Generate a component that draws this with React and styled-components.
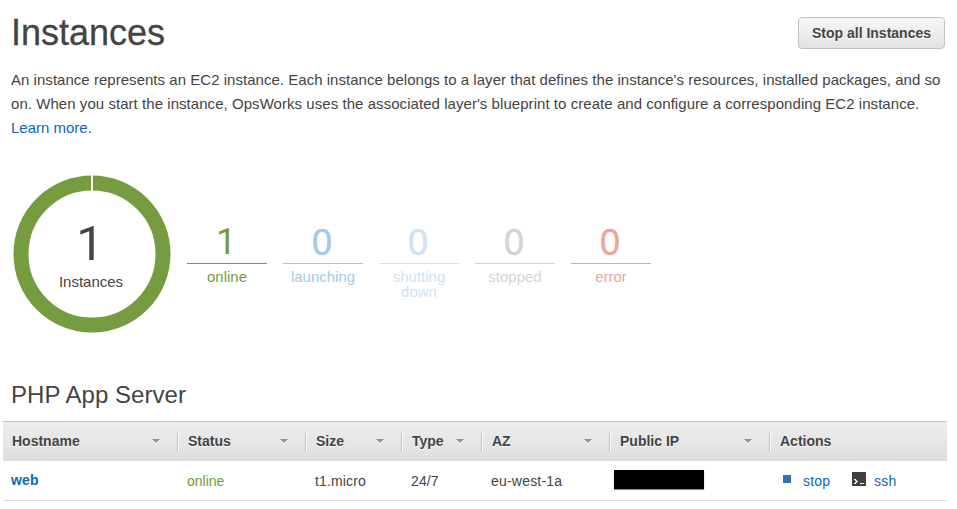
import React from "react";
import styled, { createGlobalStyle } from "styled-components";

const GlobalStyle = createGlobalStyle`
  * { box-sizing: border-box; }
  body {
    margin: 0;
    background: #fff;
    color: #444;
    font-family: "Liberation Sans", Arial, sans-serif;
    overflow: hidden;
  }
`;

const Page = styled.main`
  width: 957px;
  height: 509px;
  overflow: hidden;
`;

const Header = styled.header`
  display: flex;
  justify-content: space-between;
  align-items: flex-start;
  padding: 12px 12px 0 11px;
  height: 67px;
`;

const Title = styled.h1`
  margin: 0;
  font-size: 36px;
  font-weight: 400;
  line-height: 42px;
  -webkit-text-stroke: 0.3px #444;
`;

const StopAllButton = styled.button`
  width: 147px;
  height: 32px;
  margin-top: 5px;
  padding: 0;
  border: 1px solid #c3c3c3;
  border-radius: 4px;
  background: linear-gradient(#f7f7f7, #e2e2e2);
  color: #444;
  font: bold 14px "Liberation Sans", Arial, sans-serif;
  text-shadow: 0 1px 0 #fff;
  white-space: nowrap;
`;

const Intro = styled.p`
  margin: 1px 0 0 11px;
  font-size: 15px;
  line-height: 24px;
  white-space: nowrap;
`;

const IntroLine = styled.span`
  display: block;
  letter-spacing: ${(p) => p.$spacing || 0}px;
`;

const Link = styled.a`
  color: #1166bb;
  text-decoration: none;
`;

const Summary = styled.section`
  display: flex;
  margin-top: 35px;
  padding-left: 13px;
  height: 158px;
`;

const Donut = styled.div`
  display: grid;
  width: 158px;
  height: 158px;
  > * { grid-area: 1 / 1; }
`;

const DonutLabel = styled.div`
  display: flex;
  flex-direction: column;
  align-items: center;
  padding-top: 40px;
  padding-right: 2px;
  font-size: 15px;
  line-height: 20px;
`;

const Total = styled.span`
  font-family: Roboto, "Liberation Sans", sans-serif;
  font-size: 49px;
  line-height: 57px;
  margin-right: 2px;
`;

const Stats = styled.div`
  display: flex;
  gap: 16px;
  margin: 47px 0 0 16px;
`;

const Stat = styled.div`
  width: 80px;
  color: ${(p) => p.$color};
  text-align: center;
  font-size: 15px;
  line-height: 15px;
`;

const Count = styled.div`
  height: 42px;
  margin-bottom: 5px;
  padding-right: 2px;
  border-bottom: 1px solid ${(p) => p.$line};
  font-family: ${(p) => (p.$narrow ? "Roboto, " : "")}"Liberation Sans", sans-serif;
  font-size: 36px;
  line-height: ${(p) => (p.$narrow ? 41 : 42)}px;
  -webkit-text-stroke: ${(p) => (p.$narrow ? 0 : 0.5)}px ${(p) => p.$line};
`;

const LayerTitle = styled.h2`
  margin: 47px 0 0 11px;
  font-size: 24px;
  font-weight: 400;
  line-height: 30px;
  letter-spacing: 0.05px;
`;

const Table = styled.div`
  width: 944px;
  margin: 11px 0 0 3px;
  font-size: 14px;
`;

const columns = "174px 128px 96px 80px 128px 160px 178px";

const HeadRow = styled.div`
  display: grid;
  grid-template-columns: ${columns};
  align-items: center;
  height: 40px;
  border-top: 1px solid #c2c2c2;
  background: linear-gradient(#eeeeee, #dedede);
`;

const HeadCell = styled.div`
  display: flex;
  align-items: center;
  justify-content: space-between;
  height: 18px;
  padding: 0 18px 2px ${(p) => (p.$first ? 9 : 10)}px;
  border-left: ${(p) => (p.$first ? "0" : "1px solid #bfbfbf")};
  box-shadow: ${(p) => (p.$first ? "none" : "inset 1px 0 0 #fff")};
  font-weight: bold;
  white-space: nowrap;
  text-shadow: 0 1px 0 #fff;
`;

const ArrowMark = styled.svg`
  margin: 1px -1px 0 0;
`;

const Row = styled.div`
  display: grid;
  grid-template-columns: ${columns};
  height: 40px;
  border-bottom: 1px solid #dcdcdc;
  line-height: 40px;
`;

const Cell = styled.div`
  padding-left: ${(p) => (p.$first ? 8 : 10)}px;
  color: ${(p) => (p.$online ? "#759c3e" : "inherit")};
  font-weight: ${(p) => (p.$first ? "bold" : "normal")};
  letter-spacing: ${(p) => p.$spacing || 0}px;
  white-space: nowrap;
`;

const HostLink = styled(Link)`
  display: block;
  line-height: 38px;
  letter-spacing: 0.2px;
`;

const Redaction = styled.div`
  width: 90px;
  height: 19px;
  margin: 9px 0 0 5px;
  background: #000;
  box-shadow: 0 1px 1px #999;
`;

const Actions = styled.div`
  display: flex;
  padding-left: 14px;
  color: #1166bb;
`;

const ActionLabel = styled.span`
  width: ${(p) => p.$width}px;
  letter-spacing: 0.2px;
`;

const StopIcon = styled.i`
  width: 8px;
  height: 8px;
  margin: 14px 12px 0 0;
  background: #2e73b8;
`;

const TerminalIcon = styled.svg`
  margin: 11px 8px 0 21px;
`;

const Arrow = () => (
  <ArrowMark width="8" height="5" viewBox="0 0 8 5">
    <path d="M0 1H8L4 5Z" fill="#fff" />
    <path d="M0 0H8L4 4Z" fill="#909090" />
  </ArrowMark>
);

const stats = [
  { count: 1, label: "online", color: "#759c3e" },
  { count: 0, label: "launching", color: "#a6c9e8" },
  { count: 0, label: "shutting down", color: "#d1e2f2" },
  { count: 0, label: "stopped", color: "#d4d4d4" },
  { count: 0, label: "error", color: "#f0a49d" },
];

const heads = ["Hostname", "Status", "Size", "Type", "AZ", "Public IP", "Actions"];

export default function App() {
  return (
    <Page>
      <GlobalStyle />
      <Header>
        <Title>Instances</Title>
        <StopAllButton>Stop all Instances</StopAllButton>
      </Header>
      <Intro>
        <IntroLine $spacing={0.031}>
          An instance represents an EC2 instance. Each instance belongs to a layer that defines the instance's resources, installed packages, and so
        </IntroLine>
        <IntroLine $spacing={0.052}>
          on. When you start the instance, OpsWorks uses the associated layer's blueprint to create and configure a corresponding EC2 instance.
        </IntroLine>
        <IntroLine>
          <Link>Learn more</Link>.
        </IntroLine>
      </Intro>
      <Summary>
        <Donut>
          <svg width="158" height="158" viewBox="0 0 158 158">
            <circle cx="79" cy="79" r="71" fill="none" stroke="#759c3e" strokeWidth="15" />
            <path d="M79 0V17" stroke="#fff" strokeWidth="2" />
          </svg>
          <DonutLabel>
            <Total>1</Total>
            Instances
          </DonutLabel>
        </Donut>
        <Stats>
          {stats.map((s) => (
            <Stat key={s.label} $color={s.color}>
              <Count $line={s.color} $narrow={s.count === 1}>{s.count}</Count>
              {s.label}
            </Stat>
          ))}
        </Stats>
      </Summary>
      <LayerTitle>PHP App Server</LayerTitle>
      <Table>
        <HeadRow>
          {heads.map((h, i) => (
            <HeadCell key={h} $first={i === 0}>
              {h}
              {h !== "Actions" && <Arrow />}
            </HeadCell>
          ))}
        </HeadRow>
        <Row>
          <Cell $first><HostLink>web</HostLink></Cell>
          <Cell $online>online</Cell>
          <Cell $spacing={0.15}>t1.micro</Cell>
          <Cell $spacing={0.1}>24/7</Cell>
          <Cell $spacing={0.2}>eu-west-1a</Cell>
          <Redaction />
          <Actions>
            <StopIcon />
            <ActionLabel $width={28}>stop</ActionLabel>
            <TerminalIcon width="14" height="14" viewBox="0 0 14 14" shapeRendering="crispEdges">
              <rect width="14" height="14" fill="#414141" />
              <path d="M2 7h2v1h1v1h1v1h-1v1h-1v1h-2v-1h1v-1h1v-1h-1v-1h-1zM8 11h4v1h-4z" fill="#fff" />
            </TerminalIcon>
            <ActionLabel $width={24}>ssh</ActionLabel>
          </Actions>
        </Row>
      </Table>
    </Page>
  );
}
